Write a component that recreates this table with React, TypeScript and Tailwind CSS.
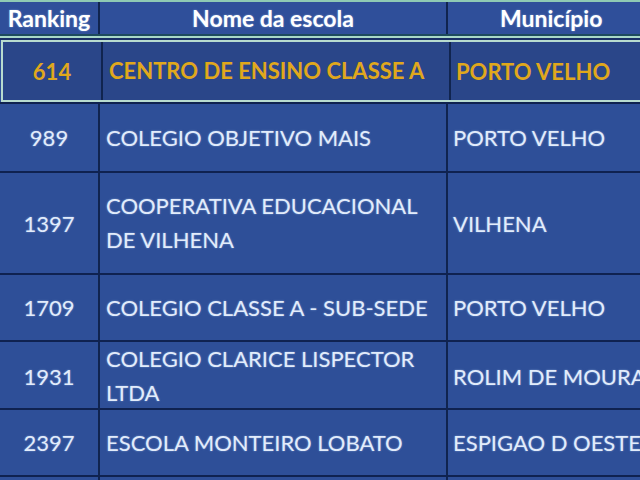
const rows = [
  { rank: "614", name: ["CENTRO DE ENSINO CLASSE A"], city: "PORTO VELHO", h: "h-[62px]", hi: true },
  { rank: "989", name: ["COLEGIO OBJETIVO MAIS"], city: "PORTO VELHO", h: "h-[67px]" },
  { rank: "1397", name: ["COOPERATIVA EDUCACIONAL", "DE VILHENA"], city: "VILHENA", h: "h-[100px]" },
  { rank: "1709", name: ["COLEGIO CLASSE A - SUB-SEDE"], city: "PORTO VELHO", h: "h-[65px]" },
  { rank: "1931", name: ["COLEGIO CLARICE LISPECTOR", "LTDA"], city: "ROLIM DE MOURA", h: "h-[66px]" },
  { rank: "2397", name: ["ESCOLA MONTEIRO LOBATO"], city: "ESPIGAO D OESTE", h: "h-[65px]" },
];

const glow = "[text-shadow:0_0_2px_rgba(190,220,255,0.55)]";

export default function App() {
  return (
    <div className="w-[640px] h-[480px] overflow-hidden bg-[#2e4f98] font-['Lato','Liberation_Sans',sans-serif]">
      <div className="w-[720px]">
        {/* header */}
        <div className="border-t-2 border-[#8fcab4]">
          <div className="grid grid-cols-[100px_348px_272px] h-[32px] bg-[#2f4f9a] text-white font-bold text-[23px] leading-none">
            <div className={`flex items-center justify-center border-r-2 border-[#10244f] ${glow}`}>Ranking</div>
            <div className={`flex items-center justify-center border-r-2 border-[#10244f] ${glow}`}>Nome da escola</div>
            <div className={`flex items-center pl-[52px] ${glow}`}>Município</div>
          </div>
          <div className="h-[2px] bg-[#1d4a5e]" />
          <div className="h-[2px] bg-[#a8d8c8]" />
          <div className="h-[2px] bg-[#1a2f66]" />
        </div>

        {rows.map((r) => (
          <div key={r.rank} className="border-b-2 border-[#0f2250]">
            <div
              className={`grid grid-cols-[100px_348px_272px] ${r.h} text-[22px] ${
                r.hi
                  ? "bg-[#2a4689] text-[#e0a81c] font-bold border-2 border-[#b8dccf] ml-[1px]"
                  : `text-[#e2ecfb] ${glow}`
              }`}
            >
              <div className="flex items-center justify-center border-r-2 border-[#10244f]">{r.rank}</div>
              <div className="flex flex-col justify-center pl-[6px] leading-[34px] border-r-2 border-[#10244f]">
                {r.name.map((l) => (
                  <span key={l}>{l}</span>
                ))}
              </div>
              <div className="flex items-center pl-[5px] whitespace-nowrap">{r.city}</div>
            </div>
          </div>
        ))}

        {/* next row, only its top edge shows */}
        <div className="grid grid-cols-[100px_348px_272px] h-[40px]">
          <div className="border-r-2 border-[#10244f]" />
          <div className="border-r-2 border-[#10244f]" />
          <div />
        </div>
      </div>
    </div>
  );
}
